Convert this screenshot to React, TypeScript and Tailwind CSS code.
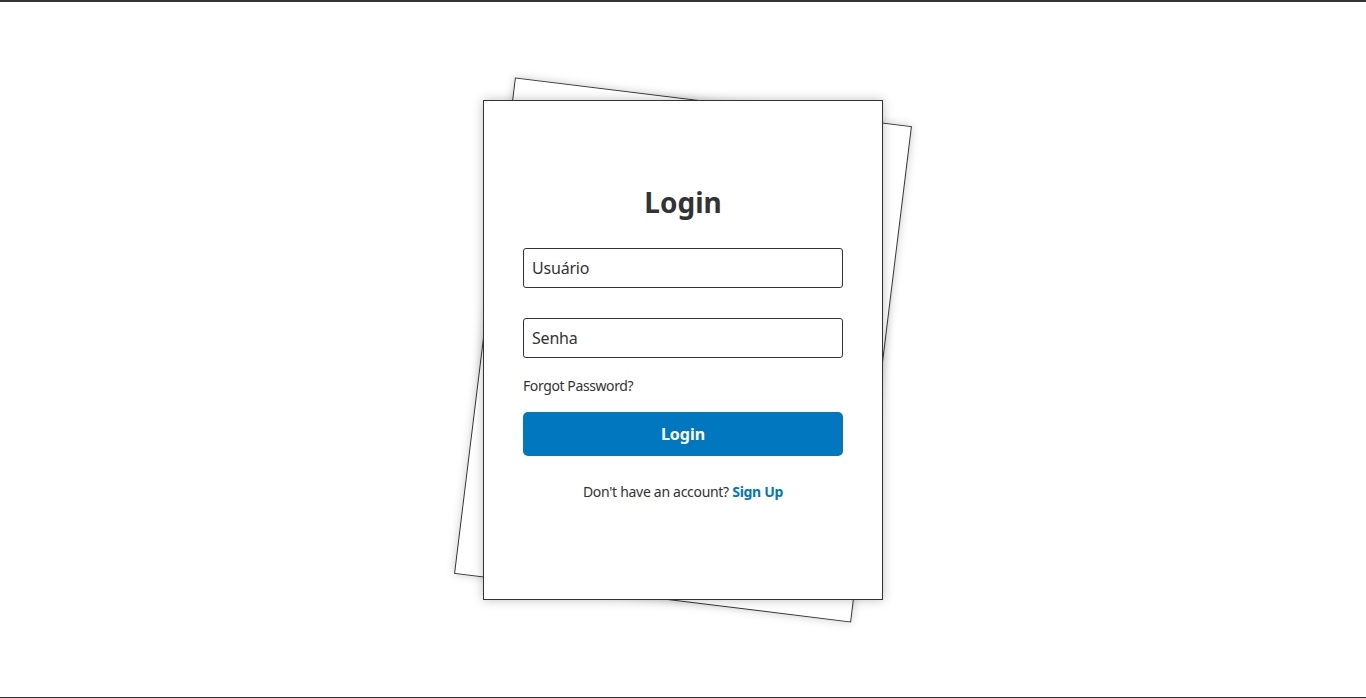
export default function App() {
  return (
    <div
      className="flex h-screen items-center justify-center border-t-2 border-b border-[#333] bg-white text-[#333]"
      style={{ fontFamily: '"Noto Sans", "Open Sans", sans-serif' }}
    >
      <div className="relative h-[500px] w-[400px]">
        {/* paper behind */}
        <div className="absolute inset-0 rotate-[7deg] border border-[#333] bg-white shadow-[0_0_10px_rgba(0,0,0,0.2)]" />
        <form
          className="relative flex h-full flex-col border border-[#333] bg-white px-[39px] pt-[83px] shadow-[0_0_10px_rgba(0,0,0,0.25)]"
          onSubmit={(e) => e.preventDefault()}
        >
          <h1 className="text-center text-[28px] font-bold leading-[36px]">Login</h1>
          <input
            type="text"
            placeholder="Usuário"
            className="mt-[28px] h-10 w-full rounded-[3px] border border-[#333] px-2 text-base tracking-[-0.2px] text-[#333] placeholder:text-[#333] outline-none"
          />
          <input
            type="password"
            placeholder="Senha"
            className="mt-[30px] h-10 w-full rounded-[3px] border border-[#333] px-2 text-base tracking-[-0.2px] text-[#333] placeholder:text-[#333] outline-none"
          />
          <a href="#" className="mt-[18px] self-start text-sm leading-5 tracking-[-0.4px] text-[#333]">
            Forgot Password?
          </a>
          <button
            type="submit"
            className="mt-4 h-11 w-full rounded-[5px] bg-[#0077be] text-base font-bold text-white"
          >
            Login
          </button>
          <p className="mt-[26px] text-center text-sm leading-5 tracking-[-0.3px]">
            Don't have an account?{" "}
            <a href="#" className="font-bold text-[#0077be]">
              Sign Up
            </a>
          </p>
        </form>
      </div>
    </div>
  );
}
